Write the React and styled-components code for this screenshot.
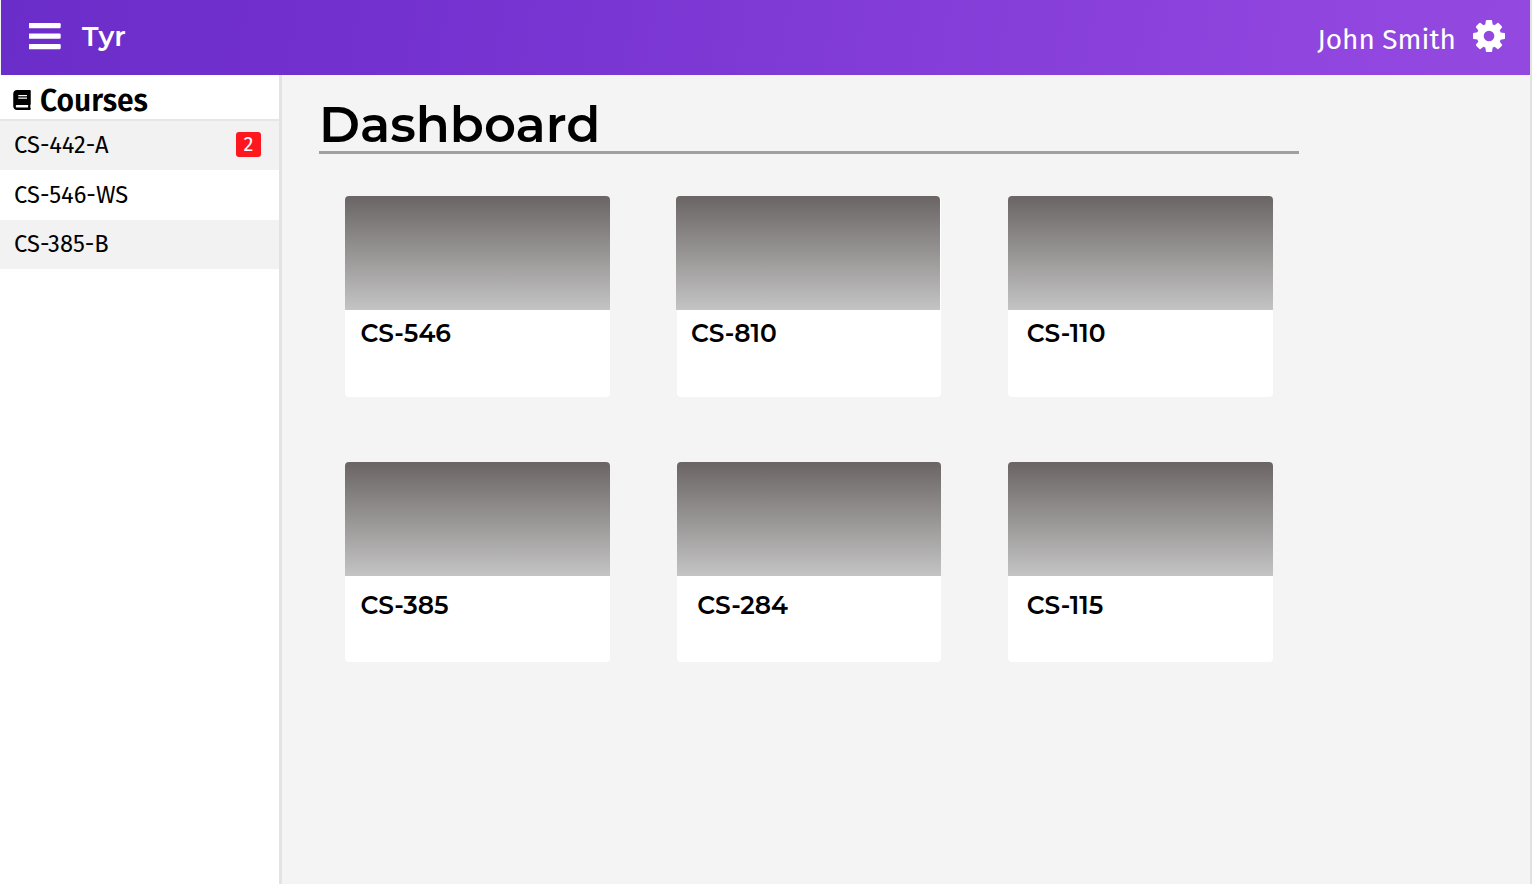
import React from "react";
import styled, { createGlobalStyle } from "styled-components";
import { FaBook } from "react-icons/fa";

const GlobalStyle = createGlobalStyle`
  * { box-sizing: border-box; }
  body { margin: 0; background: #f4f4f4; color: #000; }
`;

const display = `"Montserrat", "Inter", sans-serif`;
const text = `"Fira Sans", "Noto Sans", sans-serif`;

const Page = styled.div`
  width: 1532px;
  height: 884px;
  display: flex;
  flex-direction: column;
  overflow: hidden;
  background: #f4f4f4;
  border-right: 2px solid #e1e1e1;
`;

const TopBar = styled.header`
  flex: none;
  height: 75px;
  margin-left: 1px;
  padding: 0 25px 0 28px;
  display: flex;
  align-items: flex-start;
  color: #fff;
  background: linear-gradient(100deg, #6b2dc9 0%, #7331cf 25%, #9146df 88%, #9349e0 100%);
`;

const MenuIcon = styled.svg`
  width: 32px;
  height: 27px;
  margin-top: 23px;
  fill: currentColor;
`;

const Brand = styled.div`
  margin: 18px 0 0 21px;
  font: 600 27.4px/36px ${display};
`;

const UserName = styled.div`
  margin: 21px 17px 0 auto;
  font: 400 28px/38px ${text};
`;

const GearIcon = styled.svg`
  width: 32px;
  height: 32px;
  margin-top: 20px;
  fill: currentColor;
`;

const Body = styled.div`
  flex: 1;
  display: flex;
`;

const Sidebar = styled.nav`
  flex: none;
  width: 282px;
  background: #fff;
  border-right: 3px solid #e3e3e3;
`;

const SidebarHeading = styled.h2`
  height: 46px;
  margin: 0;
  padding: 6px 0 0 13.4px;
  display: flex;
  border-bottom: 2px solid #e6e6e6;
  font: 600 30px/40px ${text};
  white-space: nowrap;

  svg { flex: none; width: 18px; height: 20px; margin: 9px 8.5px 0 0; }
`;

const CourseRow = styled.div`
  height: ${(p) => p.$height}px;
  padding: 0 18px ${(p) => p.$bottom}px 14px;
  display: flex;
  align-items: center;
  justify-content: space-between;
  background: ${(p) => (p.$shaded ? "#f2f2f2" : "#fff")};
  font: 400 23.7px/32px ${text};
`;

const Badge = styled.span`
  width: 25px;
  height: 25px;
  border-radius: 3px;
  background: #ff171f;
  color: #fff;
  font: 400 20px/25px ${text};
  text-align: center;
`;

const Main = styled.main`
  padding: 17px 0 0 37px;
`;

const Title = styled.h1`
  width: 980px;
  height: 62px;
  margin: 0;
  border-bottom: 3px solid #a39f9f;
  font: 600 49.7px/64px ${display};
`;

const CardGrid = styled.div`
  display: grid;
  grid-template-columns: repeat(3, 264.6px);
  column-gap: 67.1px;
  row-gap: 65px;
  padding: 42px 0 0 26px;
`;

const Card = styled.article`
  height: 200.5px;
  border-radius: 4px;
  background: #fff;
`;

const Cover = styled.div`
  height: 114.4px;
  margin-left: ${(p) => p.$shift || 0}px;
  margin-right: ${(p) => -(p.$shift || 0)}px;
  border-radius: 4px 4px 0 0;
  background: linear-gradient(#6a6564, #c4c4c4);
`;

const CardName = styled.h3`
  margin: 0;
  padding: ${(p) => p.$top}px 0 0 ${(p) => p.$left}px;
  font: 600 24.9px/32px ${display};
`;

const courses = [
  { name: "CS-442-A", height: 49, bottom: 2, count: 2 },
  { name: "CS-546-WS", height: 50, bottom: 0 },
  { name: "CS-385-B", height: 49, bottom: 1 },
];

const cards = [
  { name: "CS-546", top: 7, left: 15.4 },
  { name: "CS-810", top: 7, left: 14.2, shift: -1 },
  { name: "CS-110", top: 7, left: 18.4 },
  { name: "CS-385", top: 13, left: 15.4 },
  { name: "CS-284", top: 13, left: 20.6 },
  { name: "CS-115", top: 13, left: 18.4 },
];

export default function App() {
  return (
    <Page>
      <GlobalStyle />
      <TopBar>
        <MenuIcon viewBox="0.3 0 32 27">
          <rect y="0" width="32" height="5.3" rx="1.2" />
          <rect y="10.5" width="32" height="5.3" rx="1.2" />
          <rect y="21" width="32" height="5.3" rx="1.2" />
        </MenuIcon>
        <Brand>Tyr</Brand>
        <UserName>John Smith</UserName>
        <GearIcon viewBox="128 128 1536 1536">
          <path d="M1152 896q0-106-75-181t-181-75-181 75-75 181 75 181 181 75 181-75 75-181zm512-109v222q0 12-8 23t-20 13l-185 28q-19 54-39 91 35 50 107 138 10 12 10 25t-9 23q-27 37-99 108t-94 71q-12 0-26-9l-138-108q-44 23-91 38-16 136-29 186-7 28-36 28h-222q-14 0-24.500-8.500t-11.500-21.500l-28-184q-49-16-90-37l-141 107q-10 9-25 9-14 0-25-11-126-114-165-168-7-10-7-23 0-12 8-23 15-21 51-66.500t54-70.500q-27-50-41-99l-183-27q-13-2-21-12.500t-8-23.500v-222q0-12 8-23t19-13l186-28q14-46 39-92-40-57-107-138-10-12-10-24 0-10 9-23 26-36 98.500-107.500t94.500-71.500q13 0 26 10l138 107q44-23 91-38 16-136 29-186 7-28 36-28h222q14 0 24.500 8.500t11.500 21.500l28 184q49 16 90 37l142-107q9-9 24-9 13 0 25 10 129 119 165 170 7 8 7 22 0 12-8 23-15 21-51 66.500t-54 70.500q26 50 41 98l183 28q13 2 21 12.500t8 23.500z" />
        </GearIcon>
      </TopBar>
      <Body>
        <Sidebar>
          <SidebarHeading>
            <FaBook />
            Courses
          </SidebarHeading>
          {courses.map((c, i) => (
            <CourseRow key={c.name} $height={c.height} $bottom={c.bottom} $shaded={i % 2 === 0}>
              {c.name}
              {c.count && <Badge>{c.count}</Badge>}
            </CourseRow>
          ))}
        </Sidebar>
        <Main>
          <Title>Dashboard</Title>
          <CardGrid>
            {cards.map((c) => (
              <Card key={c.name}>
                <Cover $shift={c.shift} />
                <CardName $top={c.top} $left={c.left}>
                  {c.name}
                </CardName>
              </Card>
            ))}
          </CardGrid>
        </Main>
      </Body>
    </Page>
  );
}
